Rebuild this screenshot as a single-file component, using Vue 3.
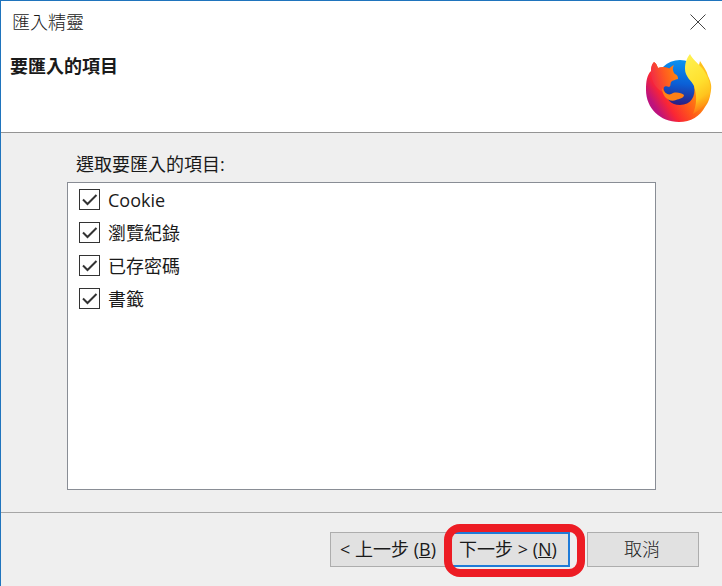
<script setup>
import { ref } from "vue";

// 可匯入的項目
const items = ref([
  { id: "cookies", label: "Cookie", checked: true },
  { id: "history", label: "瀏覽紀錄", checked: true },
  { id: "passwords", label: "已存密碼", checked: true },
  { id: "bookmarks", label: "書籤", checked: true },
]);

const emit = defineEmits(["back", "next", "cancel"]);
</script>

<template>
  <div class="wizard">
    <!-- Title bar and header -->
    <header class="wizard-header">
      <div class="title-bar">
        <div class="window-title">匯入精靈</div>
        <button
          class="close-button"
          type="button"
          aria-label="關閉"
          @click="emit('cancel')"
        >
          <svg width="16" height="16" viewBox="0 0 16 16">
            <path d="M.5 .5l15 15M15.5 .5l-15 15" stroke="#444" fill="none" />
          </svg>
        </button>
      </div>
      <div class="header-main">
        <h1 class="page-title">要匯入的項目</h1>
        <svg class="logo" width="68" height="70" viewBox="0 0 68 70">
          <defs>
            <linearGradient id="globe" x1="0.6" y1="0" x2="0.5" y2="1">
              <stop offset="0" stop-color="#0a94f0" />
              <stop offset="0.5" stop-color="#0b5fd6" />
              <stop offset="1" stop-color="#321475" />
            </linearGradient>
            <linearGradient id="body" x1="0.95" y1="0.2" x2="0.1" y2="0.7">
              <stop offset="0" stop-color="#ffc41e" />
              <stop offset="0.25" stop-color="#ff9a10" />
              <stop offset="0.55" stop-color="#ff5a18" />
              <stop offset="0.8" stop-color="#fa2634" />
              <stop offset="1" stop-color="#bd127d" />
            </linearGradient>
            <linearGradient id="head" x1="1" y1="0.3" x2="0" y2="0.6">
              <stop offset="0" stop-color="#ff8a0c" />
              <stop offset="0.5" stop-color="#ff5a20" />
              <stop offset="1" stop-color="#f0284b" />
            </linearGradient>
            <linearGradient id="tail" x1="0.3" y1="0" x2="0.6" y2="1">
              <stop offset="0" stop-color="#fff04e" />
              <stop offset="0.5" stop-color="#ffe02e" />
              <stop offset="0.75" stop-color="#ffc41e" />
              <stop offset="1" stop-color="#ffa015" stop-opacity="0" />
            </linearGradient>
          </defs>
          <circle cx="35" cy="30" r="24" fill="url(#globe)" />
          <path
            d="M55 7C58 12 62 17 63 22C65 26 67 31 66 36C65 43 64 48 60 53C55 62 46 68 34 68C15 68 1 54 1 36C1 27 2 21 6 17C6 13 7 10 9 8C12 10 12 12 13 14C18 12 23 13 27 16C19 20 17 29 19 36C21 45 26 51 35 51C46 51 51 42 49 32Z"
            fill="url(#body)"
          />
          <path
            d="M6 17C6 13 7 10 9 8C12 10 12 12 13 14C17 13 21 14 24 15C25 13 27 12 29 11C27 14 28 18 30 20C32 21 33 22 33 25C30 26 28 26 26 28C25 31 26 32 24 33C20 31 17 33 19 38C11 36 6 27 6 17Z"
            fill="url(#head)"
          />
          <path
            d="M17 34C20 40 24 42 28 39C32 38 37 39 39 41C39 44 34 45 31 46C27 48 23 46 20 43C18 40 17 37 17 34Z"
            fill="#ff8016"
          />
          <path
            d="M45 0C47 5 53 9 57 14C62 20 67 30 65 40C63 48 57 55 48 60C52 50 52 42 49 32C47 27 40 23 40 15C40 8 42 4 45 0Z"
            fill="url(#tail)"
          />
        </svg>
      </div>
    </header>

    <!-- Item selection -->
    <main class="wizard-content">
      <div id="items-label" class="items-label">選取要匯入的項目:</div>
      <div class="item-list" role="group" aria-labelledby="items-label">
        <label v-for="item in items" :key="item.id" class="item">
          <span class="check-box">
            <input v-model="item.checked" class="check-input" type="checkbox" />
            <svg
              v-if="item.checked"
              class="check-mark"
              width="21"
              height="21"
              viewBox="0 0 21 21"
            >
              <path
                d="M4 10.5l4.5 4.5L17.5 6"
                fill="none"
                stroke="#333"
                stroke-width="2"
              />
            </svg>
          </span>
          <span>{{ item.label }}</span>
        </label>
      </div>
    </main>

    <!-- Wizard buttons -->
    <footer class="wizard-footer">
      <div class="step-buttons">
        <button class="wizard-button" type="button" @click="emit('back')">
          &lt; 上一步 (<u>B</u>)
        </button>
        <div class="next-wrap">
          <button
            class="wizard-button is-default"
            type="button"
            @click="emit('next')"
          >
            下一步 &gt; (<u>N</u>)
          </button>
          <div class="highlight"></div>
        </div>
      </div>
      <button
        class="wizard-button cancel-button"
        type="button"
        @click="emit('cancel')"
      >
        取消
      </button>
    </footer>
  </div>
</template>

<style>
body {
  margin: 0;
}
</style>

<style scoped>
.wizard {
  display: flex;
  flex-direction: column;
  box-sizing: border-box;
  min-height: 100vh;
  border-top: 1px solid #1f74bd;
  border-left: 1px solid #1f74bd;
  background-color: #efefef;
  color: #1a1a1a;
  font-family: "Open Sans", "Noto Sans CJK TC", sans-serif;
  font-size: 18px;
  line-height: 24px;
}

.wizard-header {
  background-color: white;
  border-bottom: 1px solid #949494;
}

.title-bar {
  display: flex;
  justify-content: space-between;
  align-items: center;
  padding: 9px 12px 8px 11px;
}

.window-title {
  font-weight: 300;
}

.close-button {
  display: flex;
  padding: 4px;
  border: none;
  background: none;
}

.header-main {
  display: flex;
  justify-content: space-between;
  align-items: flex-start;
  padding: 12px 9px 8px;
}

.page-title {
  margin: 0;
  font-size: 18px;
  font-weight: 700;
}

.logo {
  display: block;
}

.wizard-content {
  flex: 1;
  display: flex;
  flex-direction: column;
  padding: 19px 66px 22px;
}

.items-label {
  padding: 0 9px;
  margin-bottom: 6px;
}

.item-list {
  flex: 1;
  border: 1px solid #898d95;
  background-color: white;
}

.item {
  display: flex;
  align-items: center;
  gap: 8px;
  height: 33px;
  padding-left: 11px;
}

.check-box {
  position: relative;
  display: flex;
}

.check-input {
  appearance: none;
  box-sizing: border-box;
  width: 21px;
  height: 21px;
  margin: 0;
  border: 1px solid #333;
  background-color: white;
}

.check-mark {
  position: absolute;
  inset: 0;
  pointer-events: none;
}

.wizard-footer {
  display: flex;
  justify-content: flex-end;
  gap: 17px;
  padding: 19px 23px;
  border-top: 1px solid #a6a6a6;
}

.step-buttons {
  display: flex;
}

.wizard-button {
  box-sizing: border-box;
  width: 120px;
  height: 35px;
  padding: 0 4px 2px 0;
  border: 1px solid #adadad;
  background-color: #e1e1e1;
  color: #1a1a1a;
  font: inherit;
  white-space: nowrap;
}

.wizard-button.is-default {
  border: 2px solid #1f7bd8;
}

.cancel-button {
  width: 112px;
  padding: 0 2px 2px 0;
  font-weight: 300;
}

.next-wrap {
  position: relative;
}

.highlight {
  position: absolute;
  inset: -8px -15px -10px -6px;
  border: 8px solid #ed1c24;
  border-radius: 16px;
  pointer-events: none;
}
</style>
